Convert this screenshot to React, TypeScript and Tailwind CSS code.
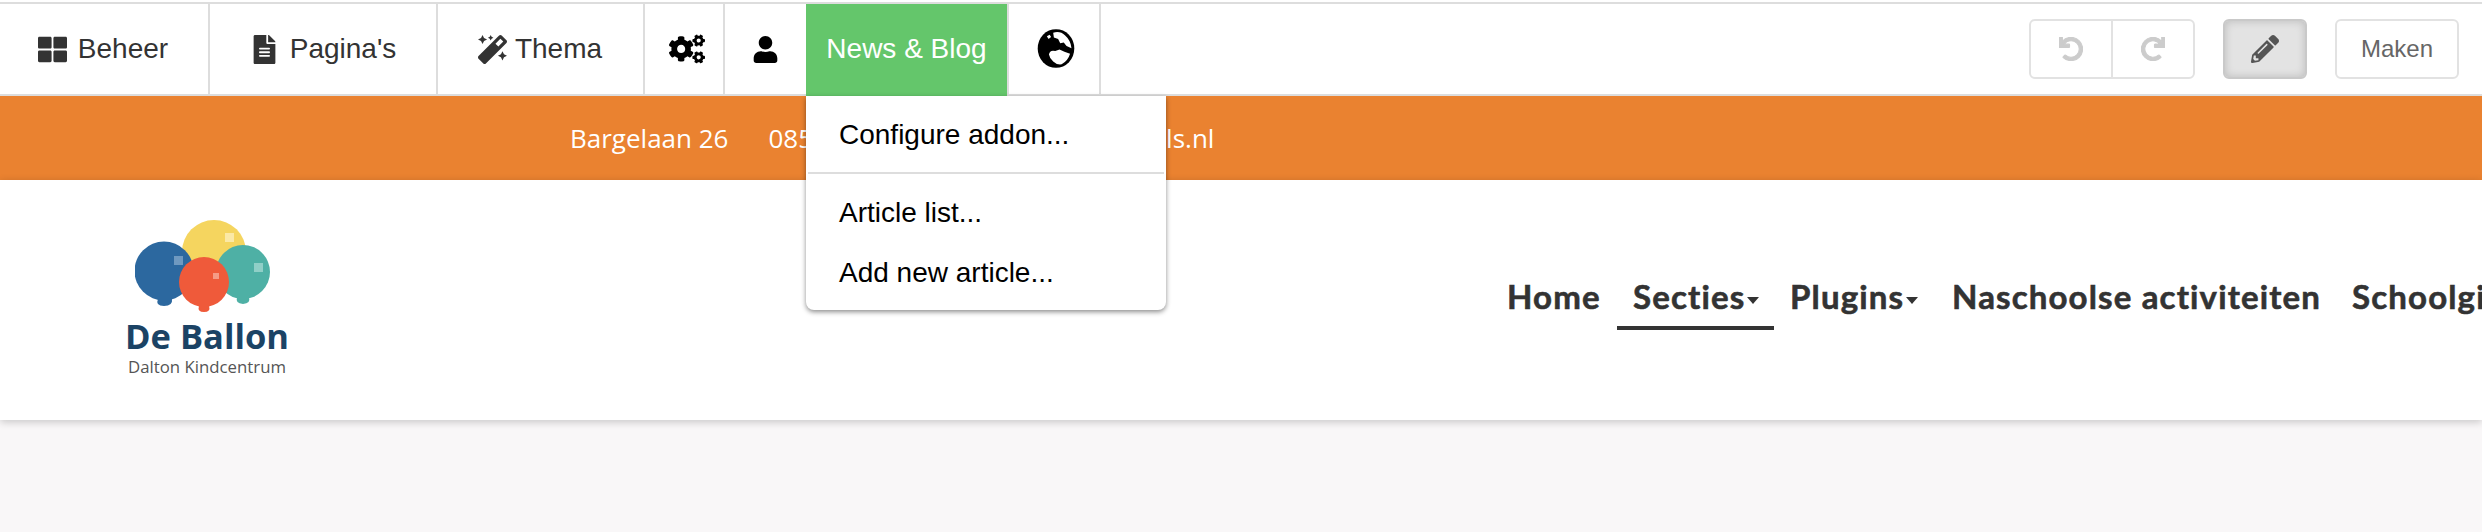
import { FaThLarge, FaFileAlt, FaMagic, FaCogs, FaUser, FaUndo, FaRedo, FaPencilAlt } from 'react-icons/fa'

const navItems = [
  { label: 'Home', width: 'w-[126px]' },
  { label: 'Secties', width: 'w-[157px]', caret: true, active: true },
  { label: 'Plugins', width: 'w-[162px]', caret: true },
  { label: 'Naschoolse activiteiten', width: 'w-[400px]' },
  { label: 'Schoolgids', width: 'w-[200px]' },
]

function Caret() {
  return <span className="mt-[8px] ml-[2px] border-x-[6px] border-t-[7px] border-x-transparent border-t-[#333]" />
}

function Globe() {
  return (
    <svg width="38" height="41" viewBox="30 38 108 114" className="-mt-[1px] ml-[4px]">
      <ellipse cx="84" cy="95" rx="52" ry="55" fill="#000" />
      <path d="M76 50 q20 -6 34 8 q16 14 18 36 l-14 -6 l-8 -10 l-10 2 l-6 -12 l-12 -4z" fill="#fff" />
      <path d="M58 60 l8 -4 l4 6 l-7 6z" fill="#fff" />
      <path d="M64 112 q2 -14 18 -10 l12 -4 l14 6 l16 6 q-6 20 -24 30 q-14 2 -24 -8 q-10 -8 -12 -20z" fill="#fff" />
    </svg>
  )
}

function Logo() {
  return (
    <div className="flex w-[162px] flex-col items-center">
      <svg width="136" height="96" viewBox="0 0 136 96" className="-ml-[8px]">
        <circle cx="79" cy="32" r="32" fill="#f5d55f" />
        <rect x="90" y="13" width="9" height="9" fill="#fbe9a6" />
        <circle cx="108" cy="52" r="27" fill="#4eb0a5" />
        <rect x="119" y="43" width="9" height="9" fill="#8fcfc7" />
        <path d="M102 78 h12 q2 5 -6 6 q-8 -1 -6 -6z" fill="#4eb0a5" />
        <circle cx="29" cy="51" r="29.5" fill="#2c689f" />
        <rect x="39" y="36" width="9" height="9" fill="#6f99c0" />
        <path d="M23 79 h14 q1 7 -8 7 q-9 0 -6 -7z" fill="#2c689f" />
        <circle cx="69" cy="62" r="25" fill="#ef5a3a" />
        <rect x="78" y="53" width="6" height="6" fill="#f59b86" />
        <path d="M64 86 h10 q2 6 -5 6 q-7 0 -5 -6z" fill="#ef5a3a" />
      </svg>
      <span className="font-['Open_Sans',sans-serif] text-[34.5px] leading-[40px] font-bold whitespace-nowrap text-[#1b4365]">De Ballon</span>
      <span className="mt-[1px] font-['Open_Sans',sans-serif] text-[16.8px] leading-[20px] whitespace-nowrap text-[#555]">Dalton Kindcentrum</span>
    </div>
  )
}

export default function App() {
  return (
    <div className="relative h-[532px] w-[2482px] overflow-hidden bg-[#f9f7f8] font-['Liberation_Sans',sans-serif]">
      <div className="relative z-20 bg-white pt-[2px]">
        <div className="flex h-[94px] items-stretch justify-between border-y-2 border-[#dddddd] bg-white">
          <div className="flex items-stretch text-[28px] text-[#333]">
            <div className="flex w-[210px] items-center justify-center gap-[11px] border-r-2 border-[#dddddd] pr-[2px]">
              <FaThLarge className="text-[29px]" />
              <span>Beheer</span>
            </div>
            <div className="flex w-[228px] items-center justify-center gap-[11px] border-r-2 border-[#dddddd]">
              <FaFileAlt className="text-[29px]" />
              <span>Pagina's</span>
            </div>
            <div className="flex w-[207px] items-center justify-center gap-[8px] border-r-2 border-[#dddddd] pr-[1px]">
              <FaMagic className="text-[29px]" />
              <span>Thema</span>
            </div>
            <div className="flex w-[80px] items-center justify-center border-r-2 border-[#dddddd] pl-[5px] text-black">
              <FaCogs className="text-[36px]" />
            </div>
            <div className="flex w-[81px] items-center justify-center text-black">
              <FaUser className="text-[27px]" />
            </div>
            <div className="relative mb-[-2px] flex w-[203px] items-center justify-center border-r-2 border-[#dddddd] bg-[#64c66b] pb-[2px] text-white">
              <span>News &amp; Blog</span>
            </div>
            <div className="flex w-[92px] items-center justify-center border-r-2 border-[#dddddd] text-black">
              <Globe />
            </div>
          </div>
          <div className="flex items-center pr-[23px]">
            <div className="flex h-[60px] w-[166px] items-stretch rounded-[6px] border-2 border-[#e2e2e2] text-[#cccccc]">
              <div className="flex w-[82px] items-center justify-center border-r-2 border-[#e2e2e2]">
                <FaUndo className="stroke-[24px] text-[24px]" />
              </div>
              <div className="flex flex-1 items-center justify-center">
                <FaRedo className="stroke-[24px] text-[24px]" />
              </div>
            </div>
            <div className="ml-[28px] flex h-[60px] w-[84px] items-center justify-center rounded-[6px] border-2 border-[#c9c9c9] bg-[#e3e3e3] text-[#555] shadow-[inset_0_0_8px_rgba(0,0,0,0.18)]">
              <FaPencilAlt className="text-[28px]" />
            </div>
            <div className="ml-[28px] flex h-[60px] w-[124px] items-center justify-center rounded-[6px] border-2 border-[#e2e2e2] text-[24px] text-[#666]">
              Maken
            </div>
          </div>
        </div>
      </div>

      <div className="flex h-[84px] items-center bg-[#ea8230] pl-[570px] font-['Open_Sans',sans-serif] text-[26px] text-white">
        <span>Bargelaan 26</span>
        <span className="ml-[40px]">085</span>
        <span className="ml-[353px]">ls.nl</span>
      </div>

      <div className="flex h-[240px] bg-white pl-[126px] shadow-[0_2px_8px_rgba(0,0,0,0.2)]">
        <div className="pt-[40px]">
          <Logo />
        </div>
        <nav className="ml-[1203px] flex h-[150px] shrink-0 items-end font-['Lato',sans-serif] text-[33px] font-bold tracking-[1.15px] text-[#333] [-webkit-text-stroke:0.6px_#333]">
          {navItems.map(item => (
            <div
              key={item.label}
              className={`${item.width} flex h-[52px] shrink-0 items-start border-b-4 pl-[16px] whitespace-nowrap ${item.active ? 'border-[#333]' : 'border-transparent'}`}
            >
              <span className="-mt-[1px] flex items-center leading-[38px]">
                {item.label}
                {item.caret && <Caret />}
              </span>
            </div>
          ))}
        </nav>
      </div>

      <div className="absolute top-[96px] left-[806px] z-30 flex h-[214px] w-[360px] flex-col rounded-b-[8px] bg-white pt-[1px] text-[28px] text-black shadow-[0_2px_5px_rgba(0,0,0,0.45)]">
        <div className="flex h-[75px] items-center pl-[33px]">Configure addon...</div>
        <div className="mx-[2px] h-[2px] bg-[#dddddd]" />
        <div className="flex h-[78px] items-center pl-[33px]">Article list...</div>
        <div className="flex h-[42px] items-center pl-[33px]">Add new article...</div>
      </div>
    </div>
  )
}
